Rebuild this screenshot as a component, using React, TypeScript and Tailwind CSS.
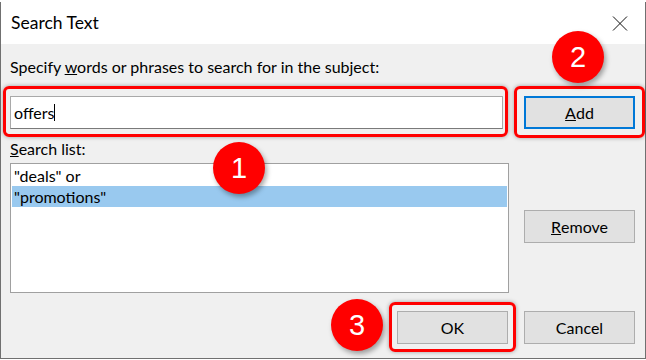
import React from "react";

const font = { fontFamily: "Lato, 'Noto Sans', sans-serif" };

function Badge({ n, className }: { n: string; className: string }) {
    return (
        <div
            className={`absolute w-[52px] h-[52px] rounded-full bg-[#ff0000] text-white text-[29px] leading-none flex items-center justify-center shadow-[2px_3px_5px_rgba(0,0,0,0.35)] font-['Liberation_Sans',Arial,sans-serif] ${className}`}
        >
            {n}
        </div>
    );
}

function Button({ children, focused }: { children: React.ReactNode; focused?: boolean }) {
    return (
        <div
            className={`w-[111px] h-[33px] bg-[#e1e1e1] flex items-center justify-center text-[16px] text-black ${
                focused ? "border-2 border-[#0078d7]" : "border border-[#adadad]"
            }`}
        >
            {children}
        </div>
    );
}

export default function App() {
    return (
        <div className="relative w-[646px] h-[360px] bg-white overflow-hidden" style={font}>
            <div className="mt-[2px] h-[357px] border-x border-b border-[#707070] flex flex-col">
                {/* title bar */}
                <div className="h-[42px] bg-white flex items-center justify-between pl-[10px] pr-[17px]">
                    <span className="text-[17.5px] text-black">Search Text</span>
                    <svg width="16" height="15" viewBox="0 0 16 15">
                        <path d="M1 0.5 L15 14.5 M15 0.5 L1 14.5" stroke="#111" strokeWidth="1" fill="none" />
                    </svg>
                </div>

                {/* body */}
                <div className="flex-1 bg-[#f0f0f0] pl-[9px] pr-[10px] pt-[13px] text-[16px] text-black flex flex-col">
                    <div className="h-[20px] leading-[20px]">
                        Specify <span className="underline">w</span>ords or phrases to search for in the subject:
                    </div>

                    <div className="mt-[19px] flex items-start justify-between">
                        <div className="relative">
                            <div className="w-[493px] h-[33px] bg-white border border-[#a9a9a9] border-b-[#7a7a7a] flex items-center pl-[3px]">
                                <span>offers</span>
                                <span className="w-px h-[17px] bg-black" />
                            </div>
                            <div className="absolute left-[-7px] right-[-5px] top-[-10px] bottom-[-8px] border-[3px] border-[#ff0000] rounded-[6px] shadow-[0_0_4px_rgba(0,0,0,0.35)]" />
                        </div>
                        <div className="relative">
                            <Button focused>
                                <span className="underline">A</span>dd
                            </Button>
                            <div className="absolute left-[-10px] right-[-10px] top-[-10px] bottom-[-9px] border-[3px] border-[#ff0000] rounded-[6px] shadow-[0_0_4px_rgba(0,0,0,0.35)]" />
                        </div>
                    </div>

                    <div className="mt-[10px] h-[20px] leading-[20px]">
                        <span className="underline">S</span>earch list:
                    </div>

                    <div className="mt-[4px] flex items-start justify-between">
                        <div className="w-[499px] h-[130px] bg-white border border-[#a0a0a0] p-px">
                            <div className="h-[21px] leading-[21px] pl-[2px]">"deals" or</div>
                            <div className="h-[21px] leading-[21px] pl-[2px] bg-[#99c9ef]">"promotions"</div>
                        </div>
                        <div className="mt-[47px]">
                            <Button>
                                <span className="underline">R</span>emove
                            </Button>
                        </div>
                    </div>

                    <div className="mt-[18px] flex justify-end gap-[16px]">
                        <div className="relative">
                            <Button>OK</Button>
                            <div className="absolute left-[-8px] right-[-8px] top-[-9px] bottom-[-8px] border-[3px] border-[#ff0000] rounded-[6px] shadow-[0_0_4px_rgba(0,0,0,0.35)]" />
                        </div>
                        <Button>Cancel</Button>
                    </div>
                </div>
            </div>

            <Badge n="2" className="left-[552px] top-[31px]" />
            <Badge n="1" className="left-[213px] top-[142px]" />
            <Badge n="3" className="left-[331px] top-[299px]" />
        </div>
    );
}
